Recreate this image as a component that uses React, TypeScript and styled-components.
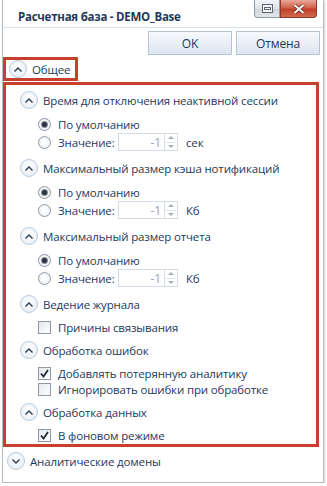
import styled, { createGlobalStyle } from "styled-components";

const Global = createGlobalStyle`
  html, body {
    margin: 0;
    padding: 0;
    background: #ffffff;
  }
  body {
    font-family: "Open Sans", "Noto Sans", sans-serif;
    font-size: 11.5px;
    letter-spacing: -0.15px;
    color: #1e395b;
  }
`;

const Window = styled.div`
  box-sizing: border-box;
  width: 322px;
  height: 483px;
  margin: 0 3px 0 2px;
  border: 1px solid #b4bcc6;
  border-top: none;
  box-shadow: 1px 1px 2px rgba(0, 0, 0, 0.18);
  display: flex;
  flex-direction: column;
  background: #fff;
`;

const TitleBar = styled.div`
  height: 28px;
  display: flex;
  border-bottom: 1px solid #dbe1e8;
  box-sizing: border-box;
`;

const Title = styled.div`
  flex: 1;
  padding: 9px 0 0 15px;
  font-weight: 700;
  font-size: 11.5px;
  letter-spacing: -0.25px;
`;

const Caption = styled.div`
  display: flex;
  align-self: flex-start;
  margin-right: 6px;
`;

const CapButton = styled.div<{ $close?: boolean }>`
  height: 18px;
  width: ${(p) => (p.$close ? 37 : 26)}px;
  box-sizing: border-box;
  display: flex;
  align-items: center;
  justify-content: center;
  border: 1px solid ${(p) => (p.$close ? "#8c3a2c" : "#8f9aa6")};
  border-top: none;
  border-radius: ${(p) => (p.$close ? "0 0 4px 0" : "0 0 0 4px")};
  background: ${(p) =>
    p.$close
      ? "linear-gradient(#e9a99a, #d0624b 45%, #c1402a 55%, #d06a4f)"
      : "linear-gradient(#f4f5f7, #dfe3e8 50%, #cfd5dc 55%, #e2e6ea)"};
`;

const ButtonBar = styled.div`
  display: flex;
  justify-content: flex-end;
  gap: 4px;
  padding: 3px 3px 0 0;
  height: 29px;
  box-sizing: border-box;
`;

const Button = styled.div`
  width: 84px;
  height: 24px;
  box-sizing: border-box;
  border: 1px solid #b7c4d3;
  background: linear-gradient(#f6f9fc, #e9eff6 50%, #dce6f1);
  display: flex;
  align-items: center;
  justify-content: center;
  font-size: 12px;
  color: #1e395b;
`;

const Highlight = styled.div`
  box-sizing: border-box;
  border: 3px solid #c8402b;
`;

const TopHeader = styled(Highlight)`
  width: 75px;
  height: 24px;
  display: flex;
  align-items: center;
  padding-left: 3px;
`;

const Group = styled(Highlight)`
  margin: 1px 4px 0 0;
  height: 365px;
  padding: 4px 0 0 14px;
  display: flex;
  flex-direction: column;
  gap: 4px;
`;

const Section = styled.div<{ $pad?: number }>`
  display: flex;
  flex-direction: column;
  gap: 4px;
  padding-bottom: ${(p) => p.$pad ?? 0}px;
`;

const Header = styled.div`
  display: flex;
  align-items: center;
  gap: 5px;
  height: 22px;
`;

const Circle = styled.div`
  width: 18px;
  height: 18px;
  border-radius: 50%;
  box-sizing: border-box;
  border: 1px solid #b9c9dc;
  background: radial-gradient(circle at 50% 40%, #ffffff, #e3ebf5);
  display: flex;
  align-items: center;
  justify-content: center;
`;

const Items = styled.div`
  display: flex;
  flex-direction: column;
  padding-left: 18px;
`;

const Row = styled.div<{ $h: number }>`
  display: flex;
  align-items: center;
  height: ${(p) => p.$h}px;
  gap: 7px;
`;

const Radio = styled.div<{ $on?: boolean }>`
  width: 13px;
  height: 13px;
  border-radius: 50%;
  box-sizing: border-box;
  border: 1px solid #8f98a3;
  background: radial-gradient(circle, #ffffff 30%, #dfe3e8);
  display: flex;
  align-items: center;
  justify-content: center;
  &::after {
    content: "";
    display: ${(p) => (p.$on ? "block" : "none")};
    width: 5px;
    height: 5px;
    border-radius: 50%;
    background: #2a3442;
    box-shadow: 0 0 0 1px #8a94a0;
  }
`;

const Check = styled.div`
  width: 13px;
  height: 13px;
  box-sizing: border-box;
  border: 1px solid #8f98a3;
  background: linear-gradient(135deg, #e4e8ec, #ffffff);
  display: flex;
  align-items: center;
  justify-content: center;
`;

const Label = styled.span<{ $w?: number }>`
  width: ${(p) => (p.$w ? `${p.$w}px` : "auto")};
  white-space: nowrap;
`;

const Spin = styled.div`
  display: flex;
  height: 18px;
`;

const SpinInput = styled.div`
  width: 46px;
  box-sizing: border-box;
  border: 1px solid #d4dce6;
  border-right: none;
  color: #9aa3ad;
  font-size: 12px;
  display: flex;
  align-items: center;
  justify-content: flex-end;
  padding-right: 3px;
`;

const SpinButtons = styled.div`
  width: 14px;
  display: flex;
  flex-direction: column;
  border: 1px solid #d4dce6;
  box-sizing: border-box;
`;

const SpinHalf = styled.div<{ $down?: boolean }>`
  flex: 1;
  display: flex;
  align-items: center;
  justify-content: center;
  border-top: ${(p) => (p.$down ? "1px solid #e3e8ee" : "none")};
  &::after {
    content: "";
    border-left: 3px solid transparent;
    border-right: 3px solid transparent;
    ${(p) =>
      p.$down
        ? "border-top: 3px solid #a6afb9;"
        : "border-bottom: 3px solid #a6afb9;"}
  }
`;

const Unit = styled.span`
  margin-left: 1px;
`;

const Footer = styled.div`
  display: flex;
  align-items: center;
  gap: 5px;
  height: 24px;
  margin-top: 2px;
  padding-left: 4px;
`;

function Chevron({ down }: { down?: boolean }) {
  return (
    <svg width="8" height="5" viewBox="0 0 8 5">
      <path
        d={down ? "M0.5 0.5 L4 4 L7.5 0.5" : "M0.5 4.5 L4 1 L7.5 4.5"}
        fill="none"
        stroke="#2a3a50"
        strokeWidth="1.4"
      />
    </svg>
  );
}

function Tick() {
  return (
    <svg width="9" height="9" viewBox="0 0 9 9">
      <path d="M1 4.5 L3.5 7.5 L8 1" fill="none" stroke="#1f2a38" strokeWidth="1.8" />
    </svg>
  );
}

function SpinBox({ unit }: { unit: string }) {
  return (
    <>
      <Spin>
        <SpinInput>-1</SpinInput>
        <SpinButtons>
          <SpinHalf />
          <SpinHalf $down />
        </SpinButtons>
      </Spin>
      <Unit>{unit}</Unit>
    </>
  );
}

function ValueSection({ title, unit }: { title: string; unit: string }) {
  return (
    <Section $pad={2}>
      <Header>
        <Circle>
          <Chevron />
        </Circle>
        {title}
      </Header>
      <Items>
        <Row $h={18}>
          <Radio $on />
          <Label>По умолчанию</Label>
        </Row>
        <Row $h={18}>
          <Radio />
          <Label $w={53}>Значение:</Label>
          <SpinBox unit={unit} />
        </Row>
      </Items>
    </Section>
  );
}

function CheckSection({ title, items }: { title: string; items: [string, boolean][] }) {
  return (
    <Section>
      <Header>
        <Circle>
          <Chevron />
        </Circle>
        {title}
      </Header>
      <Items>
        {items.map(([text, on]) => (
          <Row $h={16} key={text}>
            <Check>{on ? <Tick /> : null}</Check>
            <Label>{text}</Label>
          </Row>
        ))}
      </Items>
    </Section>
  );
}

export default function App() {
  return (
    <>
      <Global />
      <Window>
        <TitleBar>
          <Title>Расчетная база - DEMO_Base</Title>
          <Caption>
            <CapButton>
              <svg width="11" height="9" viewBox="0 0 11 9">
                <rect x="0.5" y="0.5" width="10" height="8" fill="#f4f5f7" stroke="#5d6671" />
                <rect x="2.5" y="3.5" width="6" height="2" fill="none" stroke="#5d6671" />
              </svg>
            </CapButton>
            <CapButton $close>
              <svg width="12" height="10" viewBox="0 0 12 10">
                <path d="M1.5 1 L10.5 9 M10.5 1 L1.5 9" stroke="#5a2217" strokeWidth="3.4" />
                <path d="M1.5 1 L10.5 9 M10.5 1 L1.5 9" stroke="#ffffff" strokeWidth="2" />
              </svg>
            </CapButton>
          </Caption>
        </TitleBar>
        <ButtonBar>
          <Button>OK</Button>
          <Button>Отмена</Button>
        </ButtonBar>
        <TopHeader>
          <Header>
            <Circle>
              <Chevron />
            </Circle>
            Общее
          </Header>
        </TopHeader>
        <Group>
          <ValueSection title="Время для отключения неактивной сессии" unit="сек" />
          <ValueSection title="Максимальный размер кэша нотификаций" unit="Кб" />
          <ValueSection title="Максимальный размер отчета" unit="Кб" />
          <CheckSection title="Ведение журнала" items={[["Причины связывания", false]]} />
          <CheckSection
            title="Обработка ошибок"
            items={[
              ["Добавлять потерянную аналитику", true],
              ["Игнорировать ошибки при обработке", false],
            ]}
          />
          <CheckSection title="Обработка данных" items={[["В фоновом режиме", true]]} />
        </Group>
        <Footer>
          <Circle>
            <Chevron down />
          </Circle>
          Аналитические домены
        </Footer>
      </Window>
    </>
  );
}
